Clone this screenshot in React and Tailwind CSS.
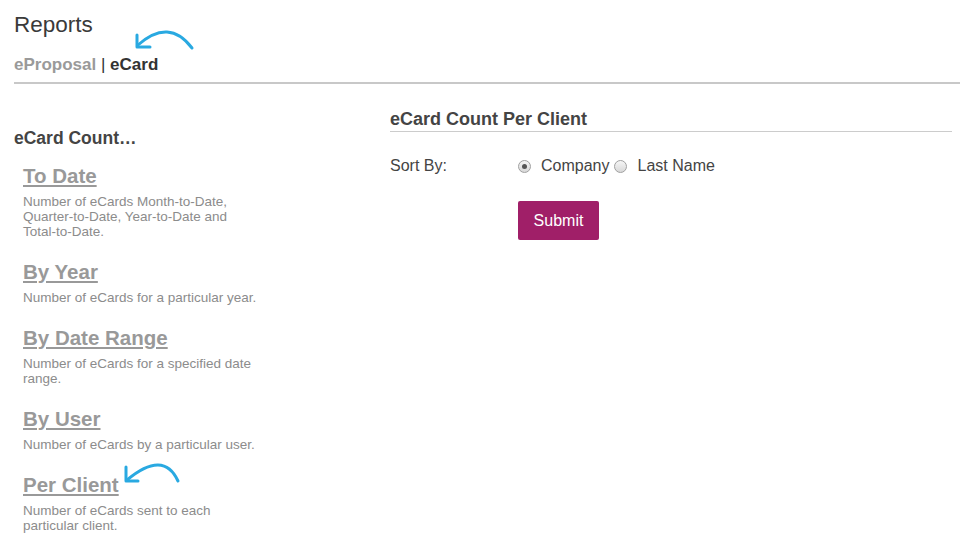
import React from 'react';

const reports = [
  { title: 'To Date', desc: 'Number of eCards Month-to-Date, Quarter-to-Date, Year-to-Date and Total-to-Date.' },
  { title: 'By Year', desc: 'Number of eCards for a particular year.' },
  { title: 'By Date Range', desc: 'Number of eCards for a specified date range.' },
  { title: 'By User', desc: 'Number of eCards by a particular user.' },
  { title: 'Per Client', desc: 'Number of eCards sent to each particular client.' },
];

function Radio({ checked }) {
  return (
    <span className="inline-flex w-[13px] h-[13px] rounded-full border border-[#a0a0a0] bg-gradient-to-b from-[#f6f6f6] to-[#d8d8d8] items-center justify-center shrink-0">
      {checked && <span className="w-[5px] h-[5px] rounded-full bg-[#555]" />}
    </span>
  );
}

function Arrow({ className, d, head }) {
  return (
    <svg className={className} fill="none" stroke="#29a9e1" strokeWidth="3" strokeLinecap="round" strokeLinejoin="round">
      <path d={d} />
      <path d={head} />
    </svg>
  );
}

export default function App() {
  return (
    <div className="relative w-[960px] h-[543px] overflow-hidden bg-white font-['Liberation_Sans',Arial,sans-serif]">
      {/* Header */}
      <div className="ml-[14px] pt-[12px] pb-[7px] border-b-2 border-[#c8c8c8]">
        <h1 className="text-[22.5px] leading-[26px] text-[#3a3a3a]">Reports</h1>
        <div className="mt-[17px] text-[17px] leading-[20px] font-bold">
          <span className="text-[#9a9a9a]">eProposal</span>
          <span className="text-[#333] font-normal"> | </span>
          <span className="text-[#333]">eCard</span>
        </div>
      </div>

      <div className="flex">
        {/* Left column */}
        <div className="w-[390px] shrink-0 pl-[14px] pt-[44px]">
          <h2 className="text-[17.5px] leading-[20px] font-bold text-[#444]">eCard Count…</h2>
          <div className="pl-[9px] pt-[16px]">
            {reports.map((r, i) => (
              <div key={i} className={i === 0 ? '' : 'mt-[21px]'}>
                <a href="#" className="block text-[20.5px] leading-[24px] font-bold text-[#999] underline decoration-2 underline-offset-[2px]">
                  {r.title}
                </a>
                <p className="mt-[6px] w-[235px] text-[13.5px] leading-[15px] text-[#8c8c8c]">{r.desc}</p>
              </div>
            ))}
          </div>
        </div>

        {/* Right column */}
        <div className="flex-1 pt-[25px] pr-[8px]">
          <h2 className="text-[18px] leading-[20px] font-bold text-[#444] pb-[2px] border-b border-[#cccccc]">eCard Count Per Client</h2>
          <div className="mt-[25px] flex items-center text-[16px] leading-[18px] text-[#444]">
            <span className="w-[128px]">Sort By:</span>
            <label className="flex items-center">
              <Radio checked />
              <span className="ml-[10px]">Company</span>
            </label>
            <label className="flex items-center ml-[5px]">
              <Radio />
              <span className="ml-[10px]">Last Name</span>
            </label>
          </div>
          <button className="mt-[26px] ml-[128px] w-[81px] h-[39px] rounded-[2px] bg-[#a01f68] text-white text-[16px]">
            Submit
          </button>
        </div>
      </div>

      {/* Annotation arrows */}
      <Arrow
        className="absolute left-[130px] top-[28px] w-[70px] h-[30px]"
        d="M62 20 Q39 -10.5 8 17"
        head="M7 7 L7 19 L20 19"
      />
      <Arrow
        className="absolute left-[115px] top-[460px] w-[75px] h-[35px]"
        d="M63 21 Q48.5 -10.5 12 20"
        head="M11 7 L11 21 L23 21"
      />
    </div>
  );
}
